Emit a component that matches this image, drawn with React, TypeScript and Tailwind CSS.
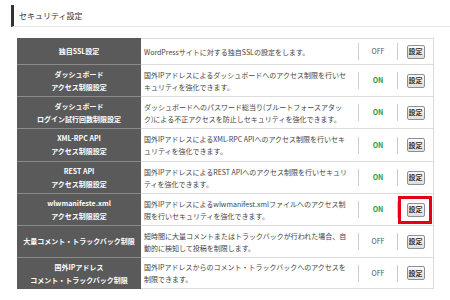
import React from "react";

type Row = {
  label: string[];
  desc: string[];
  on: boolean;
  h: string;
  mark?: boolean;
};

const rows: Row[] = [
  { label: ["独自SSL設定"], desc: ["WordPressサイトに対する独自SSLの設定をします。"], on: false, h: "h-[26px]" },
  {
    label: ["ダッシュボード", "アクセス制限設定"],
    desc: ["国外IPアドレスによるダッシュボードへのアクセス制限を行いセ", "キュリティを強化できます。"],
    on: true,
    h: "h-[32px]",
  },
  {
    label: ["ダッシュボード", "ログイン試行回数制限設定"],
    desc: ["ダッシュボードへのパスワード総当り(ブルートフォースアタッ", "ク)による不正アクセスを防止しセキュリティを強化できます。"],
    on: true,
    h: "h-[32px]",
  },
  {
    label: ["XML-RPC API", "アクセス制限設定"],
    desc: ["国外IPアドレスによるXML-RPC APIへのアクセス制限を行いセキ", "ュリティを強化できます。"],
    on: true,
    h: "h-[33px]",
  },
  {
    label: ["REST API", "アクセス制限設定"],
    desc: ["国外IPアドレスによるREST APIへのアクセス制限を行いセキュリ", "ティを強化できます。"],
    on: true,
    h: "h-[32px]",
  },
  {
    label: ["wlwmanifeste.xml", "アクセス制限設定"],
    desc: ["国外IPアドレスによるwlwmanifest.xmlファイルへのアクセス制", "限を行いセキュリティを強化できます。"],
    on: true,
    h: "h-[32px]",
    mark: true,
  },
  {
    label: ["大量コメント・トラックバック制限"],
    desc: ["短時間に大量コメントまたはトラックバックが行われた場合、自", "動的に検知して投稿を制限します。"],
    on: false,
    h: "h-[32px]",
  },
  {
    label: ["国外IPアドレス", "コメント・トラックバック制限"],
    desc: ["国外IPアドレスからのコメント・トラックバックへのアクセスを", "制限できます。"],
    on: false,
    h: "h-[31px]",
  },
];

function SettingRow({ row, last }: { row: Row; last: boolean }) {
  return (
    <div className={`flex ${row.h}`}>
      <div
        className={`w-[124px] shrink-0 bg-[#5a5a5a] flex flex-col items-center justify-center text-center text-white font-bold text-[7px] leading-[13px] ${
          last ? "" : "border-b border-[#8a8a8a]"
        }`}
      >
        {row.label.map((l) => (
          <span key={l}>{l}</span>
        ))}
      </div>
      <div className="flex-1 flex border-b border-r border-[#dcdcdc] bg-white">
        <div className="flex-1 flex flex-col justify-center pl-[3px] text-[#444] text-[7px] leading-[12px] whitespace-nowrap">
          {row.desc.map((d) => (
            <span key={d}>{d}</span>
          ))}
        </div>
        <div className="w-[39px] shrink-0 flex items-center">
          <div className="h-[17px] border-l border-[#cccccc]" />
          <span
            className={`flex-1 text-center text-[7px] ${
              row.on ? "text-[#1f9a4c] font-bold" : "text-[#555]"
            }`}
          >
            {row.on ? "ON" : "OFF"}
          </span>
        </div>
        <div className="relative w-[36px] shrink-0 flex items-center">
          <div className="h-[17px] border-l border-[#cccccc]" />
          <div className="flex-1 flex justify-center">
            <button className="w-[18px] h-[14px] rounded-[2px] border border-[#8f8f8f] bg-gradient-to-b from-[#fbfbfb] to-[#dedede] text-[#333] text-[7px] font-bold leading-none flex items-center justify-center">
              設定
            </button>
          </div>
          {row.mark && (
            <div className="absolute left-[1px] right-[1px] top-[2px] bottom-[1px] border-[3px] border-[#e60016]" />
          )}
        </div>
      </div>
    </div>
  );
}

export default function App() {
  return (
    <div className="w-[450px] h-[300px] bg-white font-['Noto_Sans_CJK_JP',sans-serif] overflow-hidden">
      <div className="pt-[5px] pl-[11px]">
        <div className="flex items-center h-[22px] border-l-[3px] border-[#333] border-b border-b-[#e6e6e6] pl-[5px] text-[8px] text-[#333]">
          セキュリティ設定
        </div>
      </div>
      <div className="mt-[11px] ml-[17px] w-[417px]">
        <div className="flex h-px">
          <div className="w-[124px] bg-[#5a5a5a]" />
          <div className="flex-1 bg-[#dcdcdc]" />
        </div>
        {rows.map((r, i) => (
          <SettingRow key={i} row={r} last={i === rows.length - 1} />
        ))}
      </div>
    </div>
  );
}
